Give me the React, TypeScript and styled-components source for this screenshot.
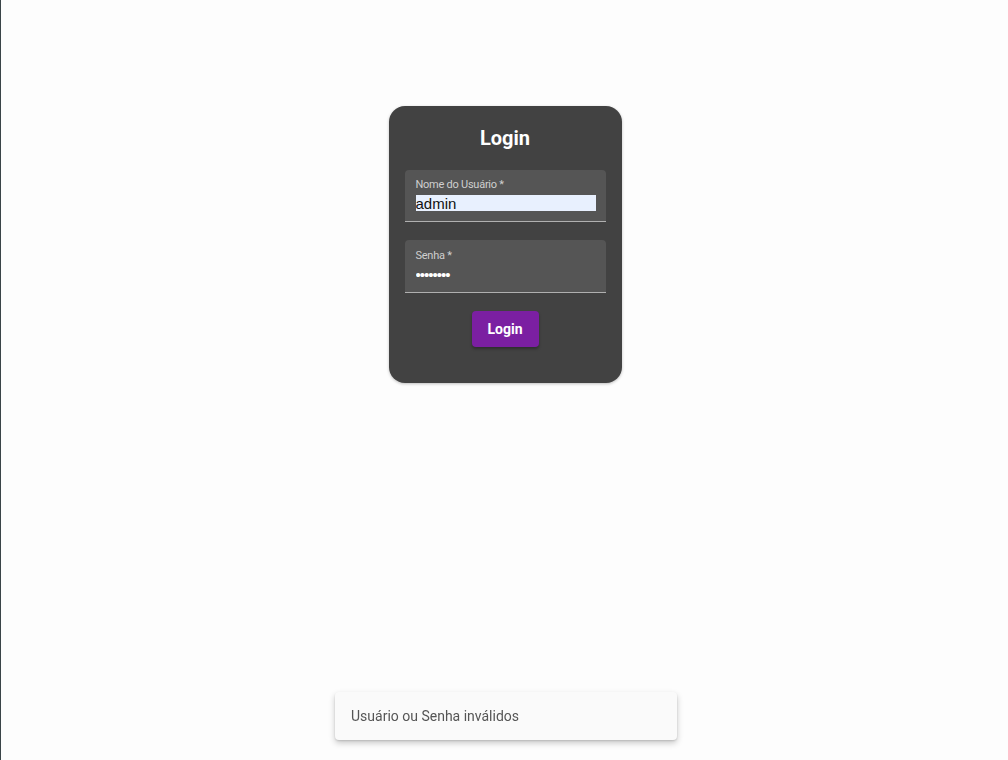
import React from "react";
import styled, { createGlobalStyle } from "styled-components";

const Global = createGlobalStyle`
  html, body { margin: 0; padding: 0; background: #fdfdfd; }
  body { font-family: Roboto, "Noto Sans", sans-serif; }
`;

const Page = styled.div`
  min-height: 760px;
  display: flex;
  flex-direction: column;
  align-items: center;
  border-left: 1px solid #3a4448;
  box-sizing: border-box;
`;

const Card = styled.form`
  margin-top: 106px;
  margin-left: 1px;
  width: 233px;
  box-sizing: border-box;
  background: #424242;
  border-radius: 16px;
  padding: 16px 16px 36px;
  display: flex;
  flex-direction: column;
  align-items: stretch;
  box-shadow: 0 1px 3px rgba(0, 0, 0, 0.25);
`;

const Title = styled.h1`
  margin: 0 0 16px;
  font-size: 20px;
  line-height: 32px;
  font-weight: 700;
  color: #ffffff;
  text-align: center;
`;

const Field = styled.label<{ $top?: number }>`
  display: flex;
  flex-direction: column;
  background: #555555;
  border-radius: 4px 4px 0 0;
  border-bottom: 1px solid #b0b0b0;
  padding: ${(p) => p.$top ?? 8}px 10px 10px 11px;
  margin-bottom: 18px;
`;

const Label = styled.span`
  font-size: 11px;
  line-height: 14px;
  letter-spacing: -0.25px;
  color: #cfcfcf;
  margin-bottom: 3px;
`;

const Input = styled.input<{ $autofill?: boolean }>`
  height: 16px;
  border: none;
  outline: none;
  padding: 0;
  margin: 0;
  font-family: "Liberation Sans", Arial, sans-serif;
  font-size: 15px;
  background: ${(p) => (p.$autofill ? "#e8f0fe" : "transparent")};
  color: ${(p) => (p.$autofill ? "#111" : "#ffffff")};
  letter-spacing: ${(p) => (p.$autofill ? "0" : "-1px")};
`;

const ButtonRow = styled.div`
  display: flex;
  justify-content: center;
`;

const Button = styled.button`
  width: 67px;
  height: 36px;
  border: none;
  border-radius: 4px;
  background: #7b1fa2;
  color: #fff;
  font-family: Roboto, sans-serif;
  font-size: 14px;
  font-weight: 700;
  box-shadow: 0 2px 3px rgba(0, 0, 0, 0.3);
  cursor: pointer;
`;

const Snackbar = styled.div`
  position: fixed;
  left: 335px;
  bottom: 20px;
  width: 342px;
  height: 48px;
  box-sizing: border-box;
  display: flex;
  align-items: center;
  padding: 0 16px;
  background: #fafafa;
  border-radius: 4px;
  box-shadow: 0 3px 6px rgba(0, 0, 0, 0.22), 0 1px 2px rgba(0, 0, 0, 0.12);
  font-size: 14px;
  color: #555;
`;

export default function App() {
  return (
    <>
      <Global />
      <Page>
        <Card onSubmit={(e) => e.preventDefault()}>
          <Title>Login</Title>
          <Field>
            <Label>Nome do Usuário *</Label>
            <Input $autofill defaultValue="admin" />
          </Field>
          <Field $top={9}>
            <Label>Senha *</Label>
            <Input type="password" defaultValue="12345678" />
          </Field>
          <ButtonRow>
            <Button type="submit">Login</Button>
          </ButtonRow>
        </Card>
      </Page>
      <Snackbar>Usuário ou Senha inválidos</Snackbar>
    </>
  );
}
